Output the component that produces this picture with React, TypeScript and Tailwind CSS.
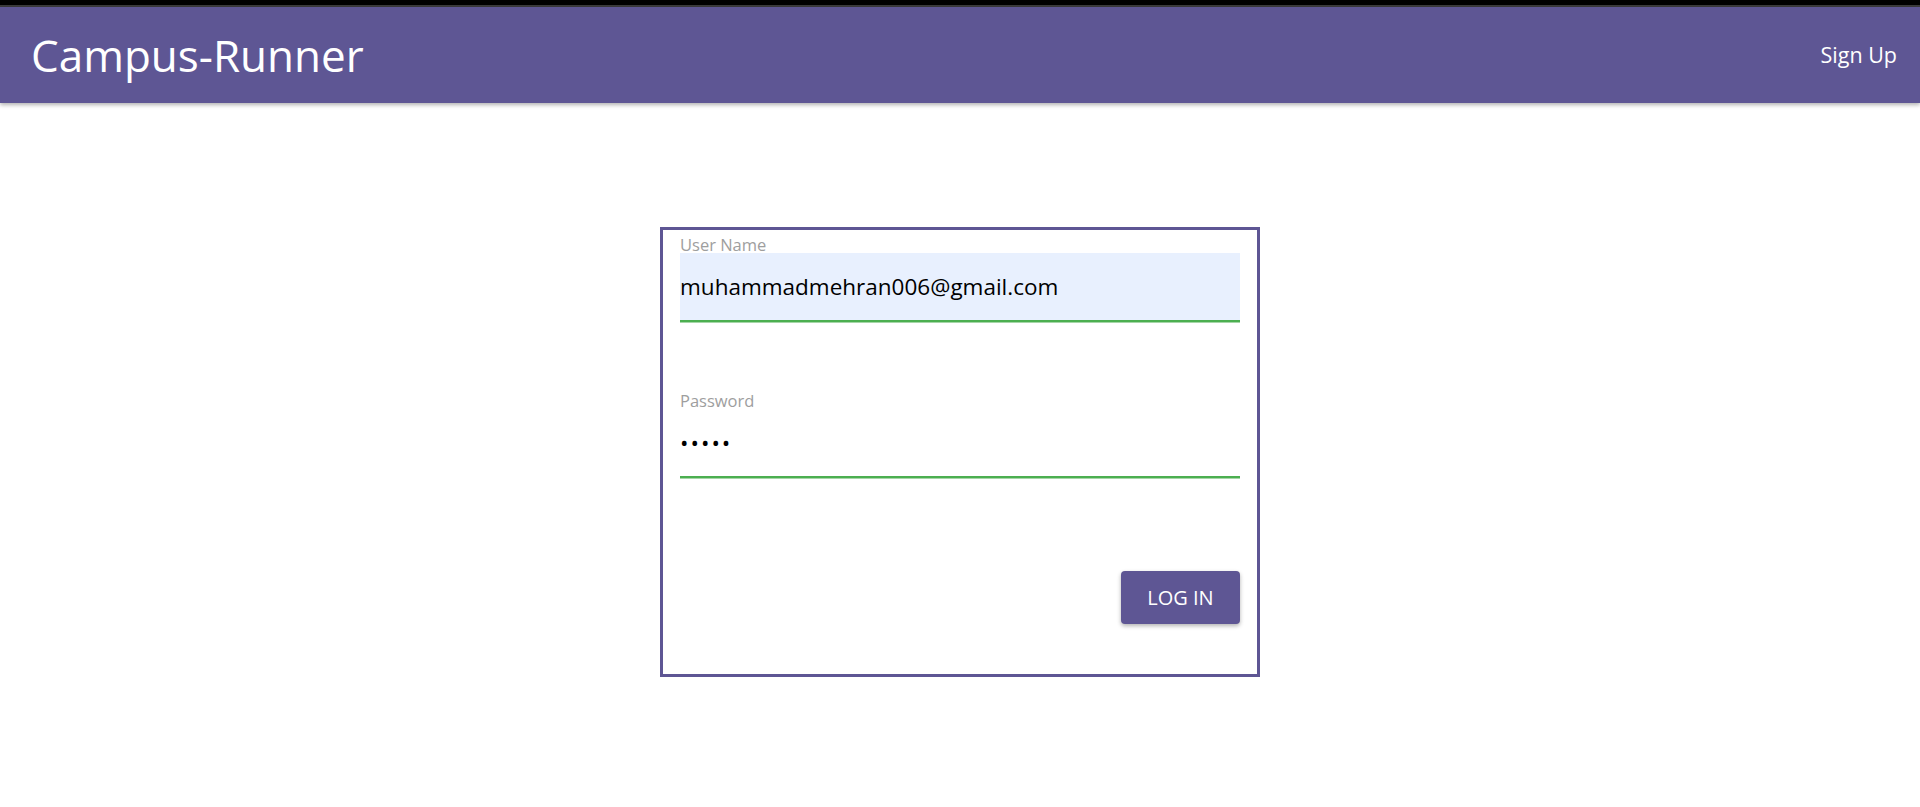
import React from "react";

const PURPLE = "bg-[#5e5694]";

function Field({
  label,
  value,
  type = "text",
  filled = false,
}: {
  label: string;
  value: string;
  type?: string;
  filled?: boolean;
}) {
  return (
    <div className="flex flex-col">
      {/* floating label */}
      <div className="h-[23px] flex items-end">
        <label className="text-[16.5px] leading-[16px] text-[#9e9e9e]">{label}</label>
      </div>
      <input
        type={type}
        defaultValue={value}
        readOnly
        className={`h-[67px] w-full outline-none text-[22.5px] text-black ${
          filled ? "bg-[#e8f0fe]" : "bg-transparent tracking-[2px]"
        }`}
      />
      {/* focused underline */}
      <div className="h-[2px] bg-[#4caf50]" />
      <div className="h-[1px] bg-[#a5d6a7]" />
    </div>
  );
}

export default function App() {
  return (
    <div className="min-h-screen bg-white font-['Open_Sans','Noto_Sans',sans-serif]">
      <div className="h-[5px] bg-black" />
      <div className="h-[2px] bg-[#3b3b3b]" />

      {/* App bar */}
      <header
        className={`h-[96px] ${PURPLE} flex items-center justify-between pl-[31px] pr-[23px] text-white shadow-[0_2px_4px_rgba(0,0,0,0.3)]`}
      >
        <h1 className="text-[44px] leading-none font-normal">Campus-Runner</h1>
        <span className="text-[21.5px]">Sign Up</span>
      </header>

      {/* Login card */}
      <main className="flex justify-center pt-[124px]">
        <form className="w-[600px] h-[450px] border-[3px] border-[#5e5694] px-[17px] flex flex-col">
          <Field label="User Name" value="muhammadmehran006@gmail.com" filled />
          <div className="h-[63px]" />
          <Field label="Password" value="12345" type="password" />
          <div className="flex justify-end pt-[92px]">
            <button
              type="button"
              className={`h-[53px] w-[119px] rounded ${PURPLE} text-white text-[20px] uppercase shadow-[0_2px_4px_rgba(0,0,0,0.3)]`}
            >
              Log In
            </button>
          </div>
        </form>
      </main>
    </div>
  );
}
